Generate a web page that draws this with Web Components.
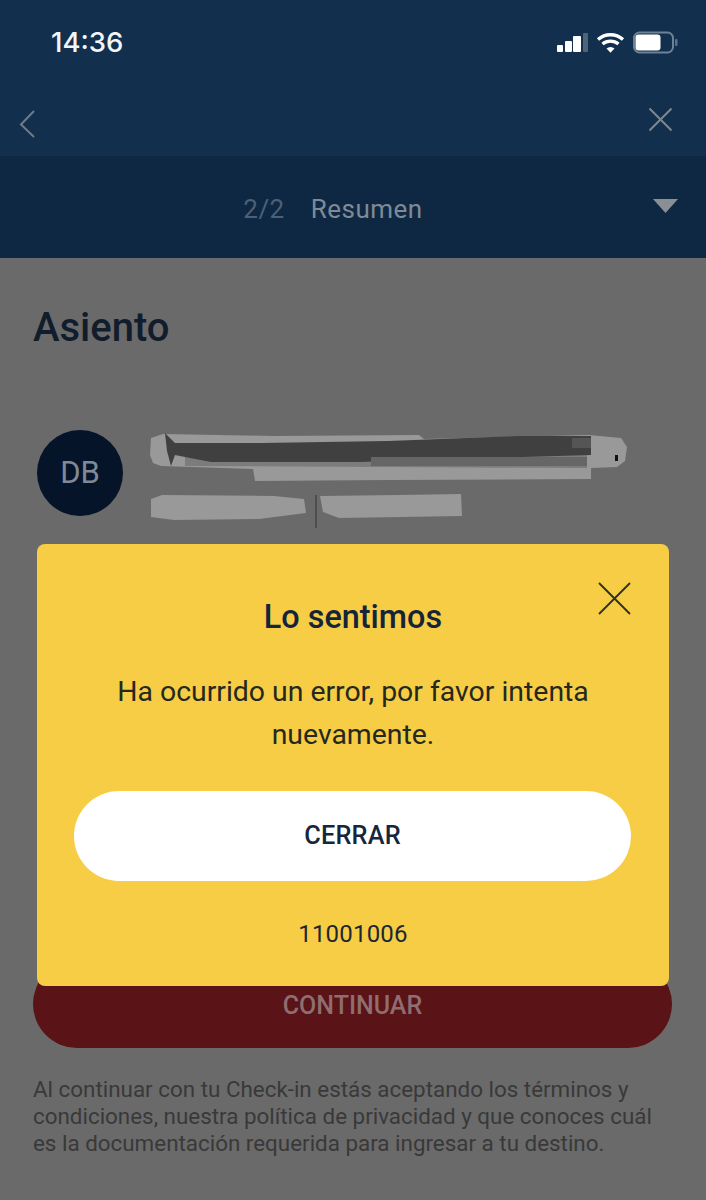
<!DOCTYPE html>
<html lang="es">
<head>
<meta charset="utf-8">
<title>Check-in</title>
<style>
html,body{margin:0;padding:0;height:1200px;overflow:hidden;background:#6a6a6a;font-family:Roboto,"Liberation Sans",sans-serif}
</style>
</head>
<body>
<checkin-screen></checkin-screen>
<template id="t-status">
<style>
:host{display:flex;justify-content:space-between;align-items:center;height:84px;padding:0 28px 0 51px;box-sizing:border-box;color:#fff}
.time{font:500 27.5px/1 Inter,Roboto,sans-serif;color:#f2f6fa;margin-top:2px}
svg{display:block}
</style>
<span class="time">14:36</span>
<svg width="124" height="24" viewBox="0 0 124 24">
<g fill="#fff"><rect x="3" y="15" width="6" height="7" rx="1"/><rect x="11" y="11" width="7" height="11" rx="1"/><rect x="19" y="6" width="8" height="16" rx="1"/></g>
<rect x="29" y="3" width="5" height="19" rx="1" fill="#4e6478"/>
<g fill="none" stroke="#fff" stroke-width="3.4"><path d="M44 9.5a19 19 0 0 1 25 0"/><path d="M48.5 14a12.5 12.5 0 0 1 16 0"/></g>
<path d="M52.500 18.500a6 6 0 0 1 8 0l-4 4.200z" fill="#fff"/>
<rect x="80" y="2.500" width="39" height="20" rx="5.500" fill="none" stroke="#6e8296" stroke-width="2"/>
<rect x="81.500" y="4.500" width="25" height="16" rx="3" fill="#fff"/>
<rect x="121" y="9" width="2.500" height="7" rx="1" fill="#5d7388"/>
</svg>
</template>
<template id="t-nav">
<style>
:host{display:flex;justify-content:space-between;align-items:center;height:72px;padding:0 33px 0 19px;box-sizing:border-box}
svg{display:block}
.back{margin-top:8px}
.close{margin-top:-2px}
</style>
<svg class="back" width="16" height="30" viewBox="0 0 16 30" fill="none" stroke="#6f7b87" stroke-width="2"><path d="M15 2 2 15.500 15 28"/></svg>
<svg class="close" width="25" height="25" viewBox="0 0 25 25" fill="none" stroke="#7d8791" stroke-width="2"><path d="M1.500 1.500 23.500 23.500M23.500 1.500 1.500 23.500"/></svg>
</template>
<template id="t-steps">
<style>
:host{display:flex;position:relative;justify-content:center;align-items:center;height:102px;background:#0e2844;box-sizing:border-box;font:400 26px/1 Roboto,sans-serif;letter-spacing:.5px}
.wrap{display:flex;gap:26px;margin:4px 40px 0 0}
.n{color:#4d6075}.t{color:#7f8a95}
svg{position:absolute;right:28px;top:43px}
</style>
<div class="wrap"><span class="n">2/2</span><span class="t">Resumen</span></div>
<svg width="25" height="14" viewBox="0 0 25 14"><path d="M0 0h25L12.500 14z" fill="#8a8f95"/></svg>
</template>
<template id="t-pax">
<style>
:host{display:flex;align-items:flex-start;gap:26px;padding-left:4px}
.av{width:86px;height:86px;border-radius:50%;background:#051429;color:#808a96;font:400 31px/86px Roboto,sans-serif;text-align:center;flex:none}
svg{display:block;margin-top:3px;overflow:visible}
</style>
<div class="av">DB</div>
<svg width="480" height="96" viewBox="0 0 480 96">
<g style="filter:blur(.7px)">
<path d="M2 5 14 1 124 3 270 2 275 6 440 2 472 5 478 14 476 28 468 34 442 35 442 46 240 47 106 48 104 36 12 33 4 30 1 22z" fill="#999"/>
<path d="M36 24 438 20 438 35 36 33z" fill="#7c7c7c"/>
<path d="M16 0 26 10 112 10 239 8 370 3 442 3 442 22 210 29 62 29 36 24 26 22 22 33 18 18z" fill="#404040"/>
<rect x="222" y="24" width="216" height="9" fill="#666"/>
<rect x="423" y="5" width="19" height="10" fill="#555"/>
<path d="M2 66 13 62 125 63 155 66 157 80 110 86 25 87 2 84z" fill="#999"/>
<path d="M171 63 250 62 312 61 313 83 190 85 174 79z" fill="#999"/>
</g>
<rect x="166" y="62" width="2" height="33" fill="#4e4e4e"/>
<rect x="466" y="22" width="3" height="6" fill="#111"/>
</svg>
</template>
<template id="t-modal">
<style>
:host{display:flex;flex-direction:column;position:absolute;left:37px;top:544px;width:632px;height:442px;box-sizing:border-box;background:#f6cd44;border-radius:8px;color:#16263a;text-align:center;padding:55px 37px 0}
h2{margin:0;font:500 32.400px/36px Roboto,sans-serif;color:#14243a}
p{margin:35px 0 0;font:400 28.400px/43px Roboto,sans-serif;color:#25281f}
button{display:block;margin-top:35px;height:90px;width:557px;border:0;border-radius:45px;background:#fff;color:#16263f;font:500 25.300px/1 Roboto,sans-serif;letter-spacing:.2px}
.code{margin-top:39px;font:400 24px/28px Roboto,sans-serif;color:#1c2733;letter-spacing:.2px}
svg{position:absolute;right:38px;top:38px}
</style>
<svg width="33" height="33" viewBox="0 0 33 33" fill="none" stroke="#2b3030" stroke-width="1.800"><path d="M1 1 32 32M32 1 1 32"/></svg>
<h2>Lo sentimos</h2>
<p>Ha ocurrido un error, por favor intenta nuevamente.</p>
<button>CERRAR</button>
<div class="code">11001006</div>
</template>
<script>
const mk=(name,id)=>customElements.define(name,class extends HTMLElement{
  constructor(){super();this.attachShadow({mode:'open'}).appendChild(document.getElementById(id).content.cloneNode(true));}
});
mk('status-bar','t-status');mk('nav-bar','t-nav');mk('step-bar','t-steps');mk('pax-row','t-pax');mk('error-modal','t-modal');
customElements.define('checkin-screen',class extends HTMLElement{
  constructor(){super();this.attachShadow({mode:'open'}).innerHTML=`
<style>
:host{display:block;position:relative;width:706px;height:1200px;overflow:hidden;background:#6a6a6a}
.top{background:#12304e}
main{padding:0 33px 0;box-sizing:border-box}
h1{margin:0;padding-top:48px;font:500 40px/44px Roboto,sans-serif;color:#111c2c}
pax-row{margin-top:80px}
.cta{display:flex;justify-content:center;align-items:center;margin:431px 1px 0 0;height:88px;border-radius:44px;background:#5a1316;color:#8f6d70;font:500 25px/1 Roboto,sans-serif;padding-top:2px;box-sizing:border-box}
.legal{margin:28px -10px 0 0;font:400 22.400px/27px Roboto,sans-serif;color:#393939}
</style>
<div class="top"><status-bar></status-bar><nav-bar></nav-bar></div>
<step-bar></step-bar>
<main>
<h1>Asiento</h1>
<pax-row></pax-row>
<div class="cta">CONTINUAR</div>
<p class="legal">Al continuar con tu Check-in estás aceptando los términos y<br>condiciones, nuestra política de privacidad y que conoces cuál<br>es la documentación requerida para ingresar a tu destino.</p>
</main>
<error-modal></error-modal>`;}
});
</script>
</body>
</html>
